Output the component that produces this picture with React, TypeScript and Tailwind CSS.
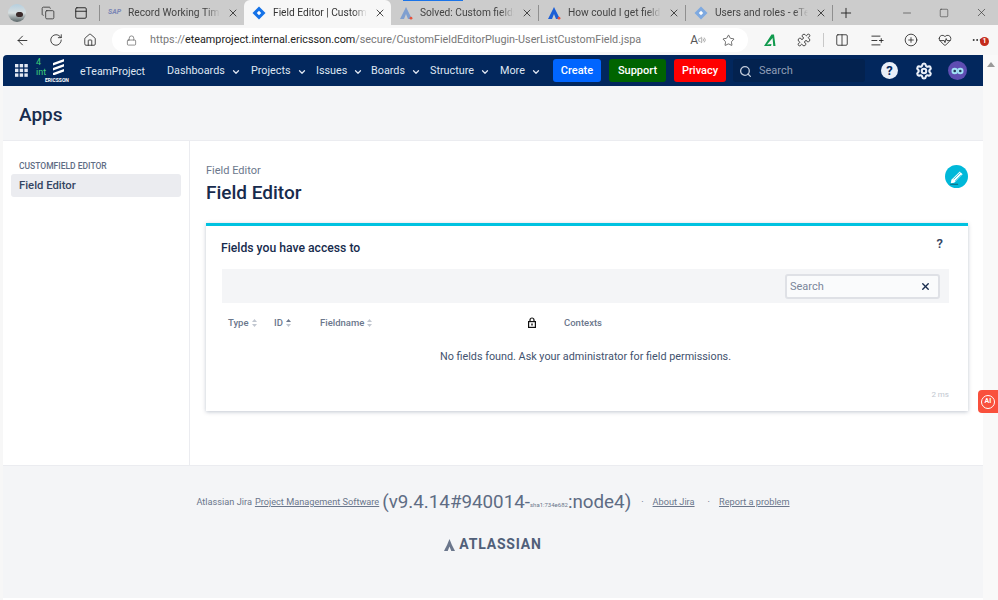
import React from 'react';
import {
  ArrowLeft,
  ChevronDown,
  Copy,
  Home,
  Lock,
  Minus,
  PanelTop,
  Plus,
  Puzzle,
  RotateCw,
  Search,
  Settings,
  Square,
  Star,
  X,
  Columns2,
  ListPlus,
  HeartPulse,
  Ellipsis,
  Volume2,
  CirclePlus,
} from 'lucide-react';

const navItems = [
  { label: 'Dashboards', w: 'w-[84px]' },
  { label: 'Projects', w: 'w-[65px]' },
  { label: 'Issues', w: 'w-[55px]' },
  { label: 'Boards', w: 'w-[59px]' },
  { label: 'Structure', w: 'w-[70px]' },
  { label: 'More', w: 'w-[53px]' },
];

function DiamondIcon({ color }: { color: string }) {
  return (
    <svg width="14" height="14" viewBox="0 0 14 14" className="shrink-0">
      <path d="M7 0.5 13.5 7 7 13.5 0.5 7z" fill={color} />
      <path d="M7 4.8 9.2 7 7 9.2 4.8 7z" fill="#fff" />
    </svg>
  );
}

function JiraMark({ dim }: { dim?: boolean }) {
  return (
    <svg width="14" height="14" viewBox="0 0 14 14" className="shrink-0">
      <path d="M7 1 1 13h4l2-5 2 5h4z" fill={dim ? '#7f9fd0' : '#1d5fd6'} />
      <circle cx="12" cy="12.2" r="1.4" fill="#e5533d" />
    </svg>
  );
}

function Tab({
  title,
  icon,
  width,
  active,
}: {
  title: string;
  icon: React.ReactNode;
  width: string;
  active?: boolean;
}) {
  return (
    <div
      className={`${width} flex h-full items-center gap-[7px] pl-[8px] pr-[5px] text-[10.2px] ${
        active ? 'rounded-t-[6px] bg-[#f7f7f7] text-[#333]' : 'text-[#444]'
      }`}
    >
      {icon}
      <span className="min-w-0 flex-1 overflow-hidden whitespace-nowrap [mask-image:linear-gradient(to_right,black_85%,transparent)]">
        {title}
      </span>
      <X size={12} strokeWidth={1.6} className="shrink-0 text-[#222]" />
    </div>
  );
}

function TabBar() {
  return (
    <div className="flex h-[25px] items-center bg-[#cccccc] font-['Roboto',sans-serif]">
      <div className="ml-[8px] flex h-[18px] w-[18px] shrink-0 items-end justify-end overflow-hidden rounded-full bg-gradient-to-b from-[#b5cfdf] via-[#d8dfe0] to-[#5a6668]">
        <div className="mb-[5px] mr-[3px] h-[5px] w-[7px] rounded-full bg-[#3a2a2a]" />
      </div>
      <Copy size={14} strokeWidth={1.4} className="ml-[15px] shrink-0 text-[#333]" />
      <PanelTop size={14} strokeWidth={1.6} className="ml-[19px] shrink-0 text-[#222]" />
      <div className="ml-[11px] h-[16px] w-px bg-[#8f8f8f]" />
      <Tab
        width="w-[144px]"
        title="Record Working Time - Ericsson"
        icon={<span className="w-[13px] shrink-0 text-[7px] font-bold italic text-[#7b86b5]">SAP</span>}
      />
      <Tab width="w-[147px]" active title="Field Editor | Customfield" icon={<DiamondIcon color="#1572e8" />} />
      <div className="relative h-full">
        <div className="absolute left-[12px] top-0 h-[1px] w-[60px] bg-[#1a73e8]" />
        <Tab width="w-[147px]" title="Solved: Custom fields editor" icon={<JiraMark dim />} />
      </div>
      <div className="h-[16px] w-px bg-[#8f8f8f]" />
      <Tab width="w-[146px]" title="How could I get field editor" icon={<JiraMark />} />
      <div className="h-[16px] w-px bg-[#8f8f8f]" />
      <Tab width="w-[146px]" title="Users and roles - eTeamProject" icon={<DiamondIcon color="#7ea9e0" />} />
      <div className="h-[16px] w-px bg-[#8f8f8f]" />
      <Plus size={16} strokeWidth={1.4} className="ml-[5px] shrink-0 text-[#222]" />
      <Minus size={12} strokeWidth={1.2} className="ml-[47px] shrink-0 text-[#333]" />
      <Square size={10} strokeWidth={1.3} className="ml-[26px] shrink-0 text-[#333]" />
      <X size={13} strokeWidth={1.2} className="ml-[26px] shrink-0 text-[#333]" />
    </div>
  );
}

function AddressBar() {
  return (
    <div className="flex h-[30px] items-center bg-[#f7f7f7] font-['Roboto',sans-serif]">
      <ArrowLeft size={15} strokeWidth={1.4} className="ml-[15px] shrink-0 text-[#222]" />
      <RotateCw size={14} strokeWidth={1.4} className="ml-[19px] shrink-0 text-[#222]" />
      <Home size={14} strokeWidth={1.4} className="ml-[20px] shrink-0 text-[#222]" />
      <div className="ml-[15px] flex h-[24px] w-[636px] shrink-0 items-center rounded-full bg-white pl-[14px]">
        <Lock size={11} strokeWidth={1.4} className="shrink-0 text-[#555]" />
        <span className="ml-[13px] whitespace-nowrap text-[10.8px] text-[#777]">
          https://<span className="text-[#222]">eteamproject.internal.ericsson.com</span>
          /secure/CustomFieldEditorPlugin-UserListCustomField.jspa
        </span>
        <span className="ml-auto flex items-center gap-[16px] pr-[13px] text-[#555]">
          <span className="flex items-center text-[12px]">
            A<Volume2 size={8} strokeWidth={1.4} />
          </span>
          <Star size={13} strokeWidth={1.3} className="text-[#333]" />
        </span>
      </div>
      <svg width="14" height="14" viewBox="0 0 14 14" className="ml-[15px] shrink-0">
        <path d="M1 13 8.5 1.5h2.5L12.5 13h-2.2L9.6 5 4 11.5l4.5-.5-.5 2z" fill="#109a4d" />
      </svg>
      <Puzzle size={14} strokeWidth={1.4} className="ml-[20px] shrink-0 text-[#222]" />
      <div className="ml-[12px] h-[14px] w-px bg-[#c8c8c8]" />
      <Columns2 size={14} strokeWidth={1.4} className="ml-[11px] shrink-0 text-[#222]" />
      <ListPlus size={15} strokeWidth={1.4} className="ml-[21px] shrink-0 text-[#222]" />
      <CirclePlus size={14} strokeWidth={1.4} className="ml-[19px] shrink-0 text-[#222]" />
      <HeartPulse size={14} strokeWidth={1.4} className="ml-[20px] shrink-0 text-[#222]" />
      <div className="relative ml-[19px] shrink-0">
        <Ellipsis size={12} strokeWidth={1.8} className="text-[#222]" />
        <span className="absolute -right-[6px] top-[3px] flex h-[9px] w-[9px] items-center justify-center rounded-full bg-[#c42b1c] text-[7px] font-bold leading-none text-white">
          1
        </span>
      </div>
    </div>
  );
}

function EricssonLogo() {
  return (
    <div className="relative ml-[8px] h-[27px] w-[38px] shrink-0 text-white">
      <span className="absolute left-0 top-[1px] text-[9px] leading-[9px] text-[#3fd07a]">4</span>
      <span className="absolute left-0 top-[11px] text-[9px] leading-[9px] text-[#3fd07a]">int</span>
      <svg width="13" height="17" viewBox="0 0 13 17" className="absolute left-[16px] top-[1px]">
        <path d="M1 5 12 1v2.6L1 7.6zM1 10 12 6v2.6L1 12.6zM1 15 12 11v2.6L1 17.6z" fill="#fff" />
      </svg>
      <span className="absolute left-[9px] top-[20px] whitespace-nowrap text-[5px] font-bold leading-[6px]">
        ERICSSON
      </span>
    </div>
  );
}

function JiraHeader() {
  return (
    <div className="flex h-[31px] items-center rounded-tl-[4px] bg-[#02275d] text-[#dfe6f2]">
      <svg width="13" height="13" viewBox="0 0 13 13" className="ml-[12px] shrink-0" fill="#e3e9f3">
        {[0, 4.7, 9.4].map((y) =>
          [0, 4.7, 9.4].map((x) => <rect key={`${x}-${y}`} x={x} y={y} width="3.4" height="3.4" />),
        )}
      </svg>
      <EricssonLogo />
      <span className="ml-[6px] w-[87px] shrink-0 pt-[2px] text-[10.5px]">eTeamProject</span>
      {navItems.map((item) => (
        <span key={item.label} className={`${item.w} flex shrink-0 items-center gap-[6px] pt-[2px] text-[10.8px]`}>
          {item.label}
          <ChevronDown size={10} strokeWidth={3} />
        </span>
      ))}
      <span className="flex h-[23px] w-[48px] shrink-0 items-center justify-center rounded-[3px] bg-[#0065ff] pt-[2px] text-[11px] font-medium text-white">
        Create
      </span>
      <span className="ml-[8px] flex h-[23px] w-[57px] shrink-0 items-center justify-center rounded-[3px] bg-[#006400] pt-[2px] text-[11px] font-medium text-white">
        Support
      </span>
      <span className="ml-[8px] flex h-[23px] w-[52px] shrink-0 items-center justify-center rounded-[3px] bg-[#ff0000] pt-[2px] text-[11px] font-medium text-white">
        Privacy
      </span>
      <div className="ml-[7px] flex h-[23px] w-[132px] shrink-0 items-center gap-[7px] rounded-[3px] bg-[#03224f] pl-[6px] pt-[2px] text-[11px] text-[#8f9db5]">
        <Search size={13} strokeWidth={2.4} className="text-[#c3ccdb]" />
        Search
      </div>
      <span className="ml-[16px] flex h-[17px] w-[17px] shrink-0 items-center justify-center rounded-full bg-[#e9eff8] text-[13px] font-bold text-[#02275d]">
        ?
      </span>
      <Settings size={18} strokeWidth={2.8} className="ml-[17px] shrink-0 text-[#e9eff8]" />
      <span className="ml-[15px] flex h-[19px] w-[19px] shrink-0 items-center justify-center rounded-full bg-[#5e4db2]">
        <svg width="13" height="8" viewBox="0 0 13 8">
          <circle cx="3.7" cy="4" r="3.2" fill="#9fe0f5" />
          <circle cx="9.3" cy="4" r="3.2" fill="#9fe0f5" />
          <circle cx="3.7" cy="4" r="1.3" fill="#253858" />
          <circle cx="9.3" cy="4" r="1.3" fill="#253858" />
        </svg>
      </span>
    </div>
  );
}

function SortArrows({ up }: { up?: boolean }) {
  return (
    <svg width="5" height="8" viewBox="0 0 5 8" className="shrink-0">
      <path d="M2.5 0 5 3H0z" fill={up ? '#6b778c' : '#c1c7d0'} />
      <path d="M2.5 8 0 5h5z" fill="#c1c7d0" />
    </svg>
  );
}

function FieldsCard() {
  return (
    <div className="ml-[16px] mr-[15px] mt-[17px] h-[188px] border-t-[3px] border-[#00c2e0] bg-white shadow-[0_1px_4px_rgba(9,30,66,0.25)]">
      <div className="flex h-[43px] items-center justify-between pl-[15px] pr-[25px]">
        <h2 className="pt-[2px] text-[12.2px] font-medium text-[#172b4d]">Fields you have access to</h2>
        <span className="mb-[8px] text-[13px] font-semibold text-[#344563]">?</span>
      </div>
      <div className="ml-[16px] mr-[19px] flex h-[34px] items-center justify-end bg-[#f4f5f7] pr-[9px]">
        <div className="flex h-[25px] w-[155px] items-center justify-between rounded-[3px] border-2 border-[#dfe1e6] bg-[#fafbfc] pl-[3px] pr-[7px] pt-[3px] text-[11px] text-[#7a869a]">
          Search
          <X size={11} strokeWidth={3} className="mb-[3px] text-[#172b4d]" />
        </div>
      </div>
      <div className="ml-[16px] mr-[19px] flex h-[40px] items-center text-[9.5px] font-medium text-[#6b778c]">
        <span className="ml-[6px] flex w-[46px] items-center gap-[3px]">
          Type <SortArrows />
        </span>
        <span className="flex w-[46px] items-center gap-[3px]">
          ID <SortArrows up />
        </span>
        <span className="flex w-[208px] items-center gap-[3px]">
          Fieldname <SortArrows />
        </span>
        <svg width="8" height="11" viewBox="0 0 8 11" className="mb-[2px] shrink-0">
          <path d="M2 4.5V3a2 2 0 0 1 4 0v1.5" fill="none" stroke="#111" strokeWidth="1.2" />
          <rect x="0.6" y="4.6" width="6.8" height="5.8" fill="none" stroke="#111" strokeWidth="1.2" />
          <rect x="3.3" y="6.5" width="1.4" height="2" fill="#111" />
        </svg>
        <span className="ml-[28px]">Contexts</span>
      </div>
      <p className="ml-[16px] mr-[19px] mt-[6px] text-center text-[10.8px] leading-[15px] text-[#42526e]">
        No fields found. Ask your administrator for field permissions.
      </p>
      <p className="mr-[19px] mt-[26px] text-right text-[8px] leading-[10px] text-[#c1c7d0]">2 ms</p>
    </div>
  );
}

function Footer() {
  return (
    <div className="flex h-[133px] flex-col items-center border-t border-[#ebecf0] bg-[#f4f5f7] text-[#6b778c]">
      <div className="mt-[22px] flex h-[28px] items-center whitespace-nowrap text-[9.2px]">
        <span>Atlassian Jira</span>
        <span className="ml-[3px] underline">Project Management Software</span>
        <span className="ml-[3px] text-[18.8px] text-[#5e6c84]">(v9.4.14#940014-</span>
        <span className="mt-[5px] text-[6px]">sha1:734e682</span>
        <span className="text-[18.8px] text-[#5e6c84]">:node4)</span>
        <span className="ml-[10px]">·</span>
        <span className="ml-[9px] underline">About Jira</span>
        <span className="ml-[13px]">·</span>
        <span className="ml-[9px] underline">Report a problem</span>
      </div>
      <div className="mt-[18px] flex items-center gap-[4px] text-[#505f79]">
        <svg width="11" height="12" viewBox="0 0 11 12">
          <path d="M5.5 0C6.6 3 8.8 8 11 12H7.3L5.5 7.6 3.7 12H0C2.2 8 4.4 3 5.5 0z" fill="#6b778c" />
        </svg>
        <span className="text-[14px] font-bold tracking-[0.8px]">ATLASSIAN</span>
      </div>
    </div>
  );
}

export default function App() {
  return (
    <div className="relative flex h-[600px] w-[998px] flex-col overflow-hidden bg-white font-['Roboto',sans-serif]">
      <TabBar />
      <AddressBar />
      <div className="flex min-h-0 flex-1 bg-[#f7f7f7] pl-[3px]">
        <div className="flex w-[980px] shrink-0 flex-col bg-white">
          <JiraHeader />
          <div className="flex h-[55px] items-center border-b border-[#ebecf0] bg-[#f4f5f7] pl-[16px] pt-[5px]">
            <h1 className="text-[19px] font-medium text-[#172b4d]">Apps</h1>
          </div>
          <div className="flex h-[324px]">
            <div className="w-[187px] shrink-0 border-r border-[#ebecf0] pl-[8px] pr-[8px]">
              <p className="ml-[8px] mt-[19px] text-[8.5px] font-medium leading-[12px] text-[#5e6c84]">
                CUSTOMFIELD EDITOR
              </p>
              <div className="mt-[2px] flex h-[23px] items-center rounded-[3px] bg-[#ebecf0] pl-[8px] pt-[2px] text-[11.3px] font-medium text-[#344563]">
                Field Editor
              </div>
            </div>
            <div className="min-w-0 flex-1">
              <div className="flex justify-between pl-[16px] pr-[15px] pt-[22px]">
                <div>
                  <p className="text-[11px] leading-[16px] text-[#6b778c]">Field Editor</p>
                  <h1 className="mt-[1px] text-[19px] font-medium leading-[26px] text-[#172b4d]">Field Editor</h1>
                </div>
                <span className="mt-[2px] flex h-[23px] w-[23px] items-center justify-center rounded-full bg-[#00b8d9]">
                  <svg width="18" height="18" viewBox="0 0 16 16">
                    <path d="M3 10.5 10.5 3l2.5 2.5L5.5 13 2.5 13.5z" fill="#fff" />
                    <path d="M5 10 11 4M6.5 11.5 12 6" stroke="#00b8d9" strokeWidth="0.7" />
                    <path d="M2 14.5h7" stroke="#0b6f86" strokeWidth="1" />
                  </svg>
                </span>
              </div>
              <FieldsCard />
            </div>
          </div>
          <Footer />
        </div>
      </div>
      <div className="absolute left-[983px] top-[55px] flex h-[545px] w-[15px] items-start justify-center bg-[#f9f9f9] pt-[7px]">
        <svg width="8" height="5" viewBox="0 0 8 5" className="shrink-0">
          <path d="M4 0 8 5H0z" fill="#9a9a9a" />
        </svg>
      </div>
      <div className="absolute left-[978px] top-[390px] flex h-[23px] w-[20px] items-center justify-center rounded-l-[4px] bg-[#f9503c]">
        <span className="flex h-[14px] w-[14px] items-center justify-center rounded-full border border-white text-[7px] font-bold text-white">
          AI
        </span>
      </div>
    </div>
  );
}
